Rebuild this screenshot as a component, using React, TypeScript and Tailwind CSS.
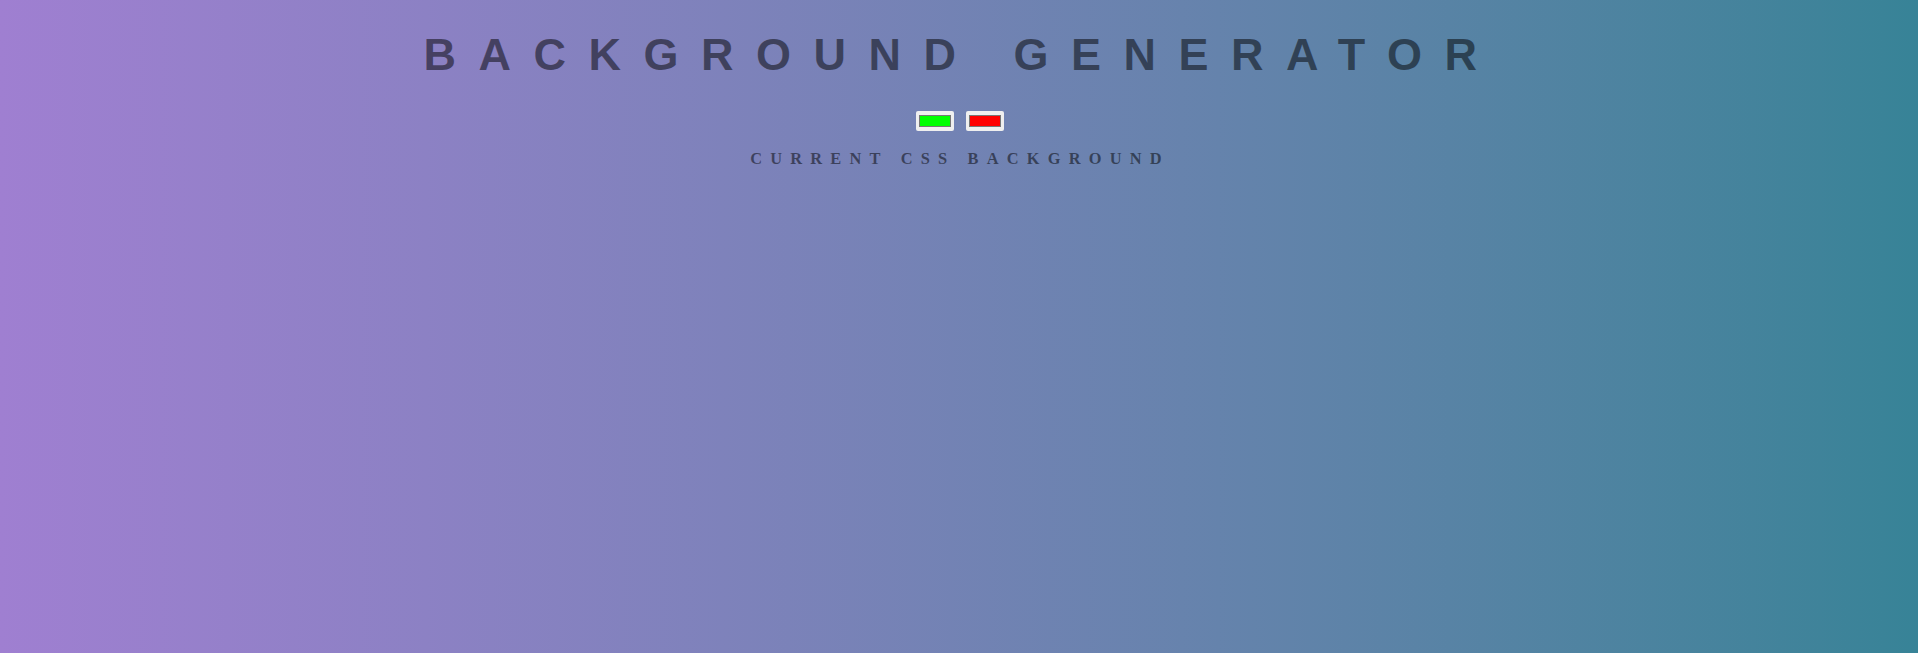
import { useState } from "react";

export default function App() {
  const [left, setLeft] = useState("#00ff00");
  const [right, setRight] = useState("#ff0000");

  return (
    <div className="min-h-screen w-full bg-gradient-to-r from-[#9f7fd1] to-[#378397] text-center uppercase text-black/50">
      <h1 className="pt-[29px] pl-[5px] font-['Liberation_Sans',Arial,sans-serif] text-[45px] leading-[52px] font-bold tracking-[0.5em]">
        Background Generator
      </h1>

      <div className="mt-[30px] flex justify-center gap-[12px] pl-[2px]">
        <input
          type="color"
          value={left}
          onChange={(e) => setLeft(e.target.value)}
          className="block h-[20px] w-[38px] cursor-pointer rounded-[2px] bg-[#efefef] p-0 [&::-webkit-color-swatch-wrapper]:px-[3px] [&::-webkit-color-swatch-wrapper]:py-[4px] [&::-webkit-color-swatch]:rounded-none [&::-webkit-color-swatch]:border [&::-webkit-color-swatch]:border-[#777]"
        />
        <input
          type="color"
          value={right}
          onChange={(e) => setRight(e.target.value)}
          className="block h-[20px] w-[38px] cursor-pointer rounded-[2px] bg-[#efefef] p-0 [&::-webkit-color-swatch-wrapper]:px-[3px] [&::-webkit-color-swatch-wrapper]:py-[4px] [&::-webkit-color-swatch]:rounded-none [&::-webkit-color-swatch]:border [&::-webkit-color-swatch]:border-[#777]"
        />
      </div>

      <h3 className="mt-[19px] pl-[2px] font-['Liberation_Serif','Times_New_Roman',serif] text-[16.4px] leading-[18px] font-black tracking-[0.5em]">
        Current CSS Background
      </h3>
    </div>
  );
}
